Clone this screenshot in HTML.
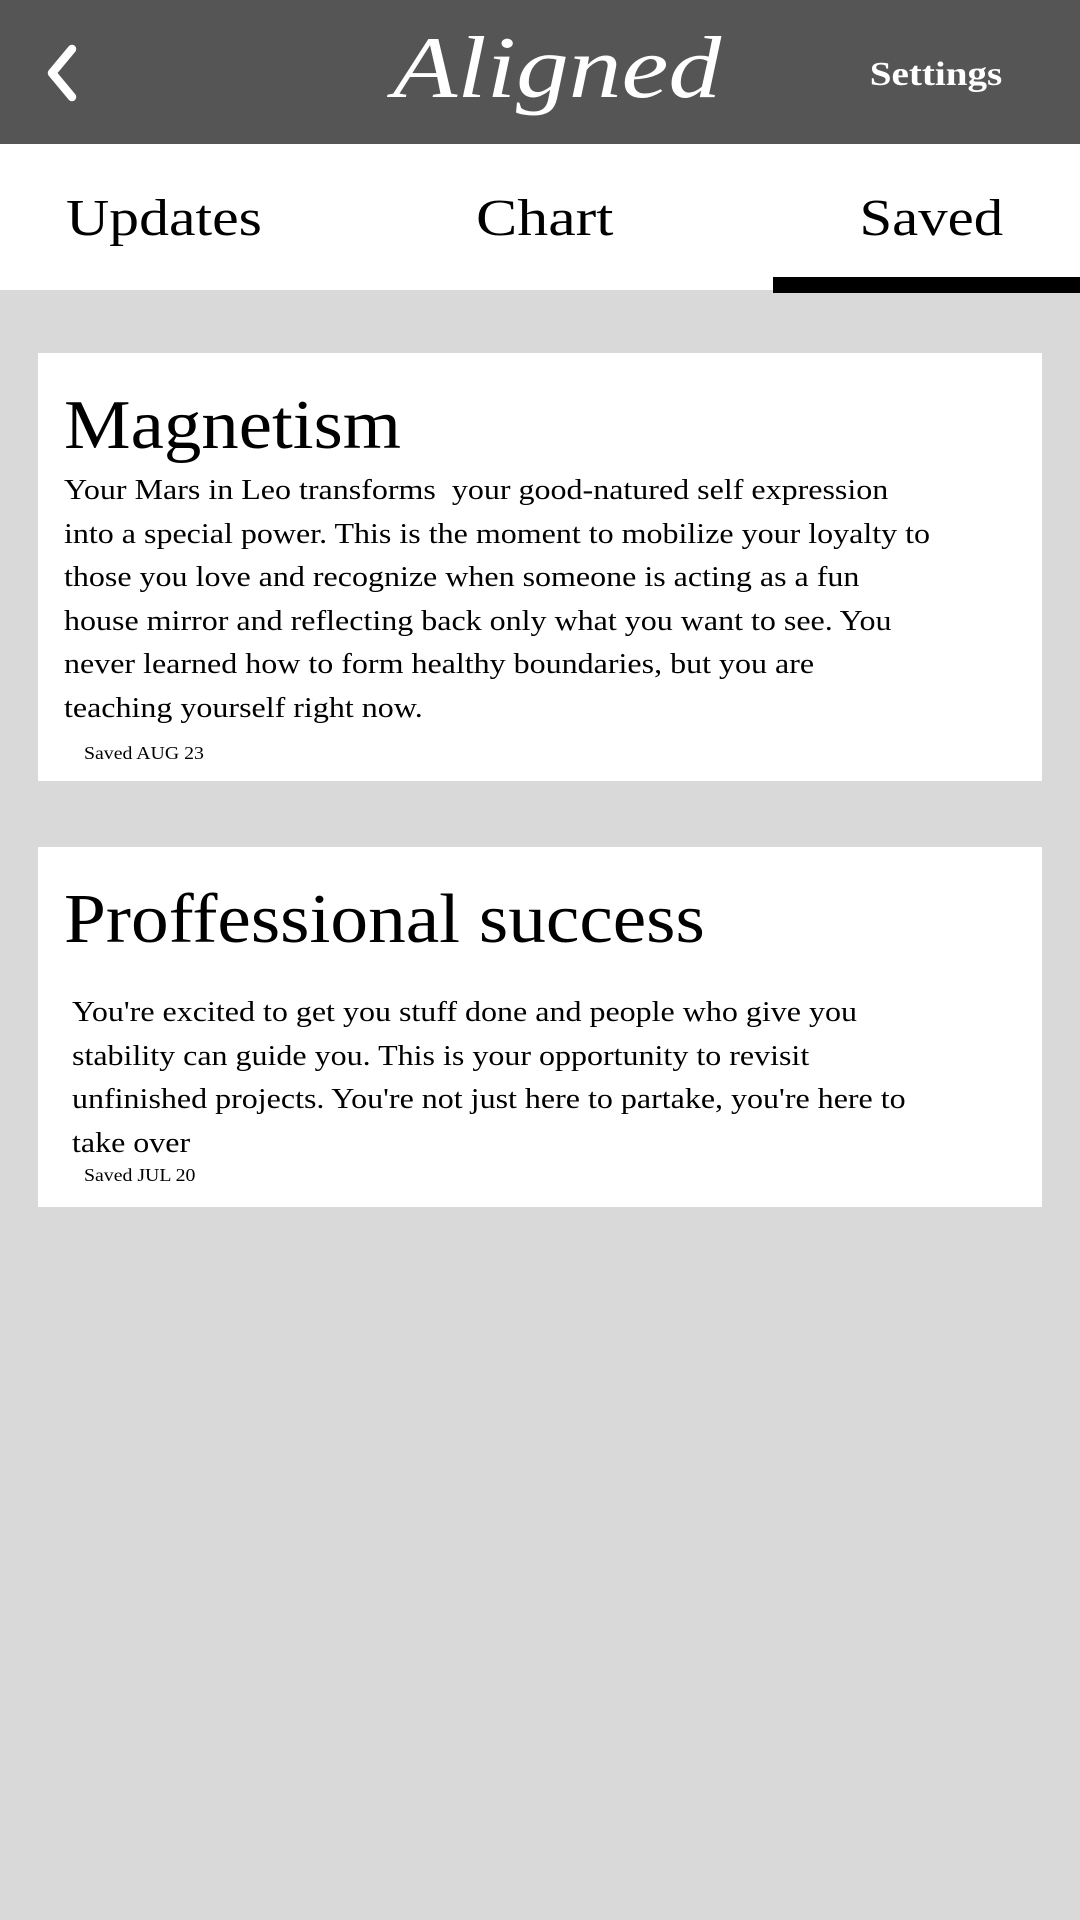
<!DOCTYPE html>
<html><head><meta charset="utf-8"><style>
body{margin:0;width:1080px;height:1920px;background:#d9d9d9;position:relative;overflow:hidden;font-family:"Liberation Serif",serif;color:#000}
.a{position:absolute;white-space:nowrap;transform-origin:left top}
.r{transform-origin:right top}
#hdr{position:absolute;left:0;top:0;width:1080px;height:144px;background:#555}
#tabs{position:absolute;left:0;top:144px;width:1080px;height:146px;background:#fff}
.card{position:absolute;left:38px;width:1004px;background:#fff}
.tab{font-size:52px;line-height:60px;top:189px}
.body{font-size:28px;line-height:43.6px;transform:scaleX(1.143)}
.sv{font-size:18px;line-height:22px;transform:scaleX(1.1)}
</style></head><body>
<div id="hdr"></div>
<svg class="a" style="left:40px;top:44px" width="40" height="58" viewBox="0 0 40 58"><path d="M32 5 L12 29 L32 53" fill="none" stroke="#fff" stroke-width="8.5" stroke-linecap="round" stroke-linejoin="round"/></svg>
<div class="a" style="left:387px;top:14px;width:340px;text-align:center;font-size:88px;line-height:110px;font-style:italic;color:#fff;transform:scaleX(1.2);transform-origin:center top">Aligned</div>
<div class="a r" style="right:78px;top:54px;font-size:34px;line-height:42px;color:#fff;font-weight:bold;transform:scaleX(1.15)">Settings</div>
<div id="tabs"></div>
<div class="a tab" style="left:66px;transform:scaleX(1.15)">Updates</div>
<div class="a tab" style="left:476px;transform:scaleX(1.19)">Chart</div>
<div class="a tab r" style="right:77px;transform:scaleX(1.13)">Saved</div>
<div class="a" style="left:773px;top:277px;width:307px;height:16px;background:#000"></div>

<div class="card" style="top:353px;height:428px"></div>
<div class="a" style="left:64px;top:386px;font-size:70px;line-height:80px;transform:scaleX(1.07)">Magnetism</div>
<div class="a body" style="left:64px;top:469px">Your Mars in Leo transforms&nbsp; your good-natured self expression<br>into a special power. This is the moment to mobilize your loyalty to<br>those you love and recognize when someone is acting as a fun<br>house mirror and reflecting back only what you want to see. You<br>never learned how to form healthy boundaries, but you are<br>teaching yourself right now.</div>
<div class="a sv" style="left:84px;top:742px">Saved AUG 23</div>

<div class="card" style="top:847px;height:360px"></div>
<div class="a" style="left:64px;top:880px;font-size:70px;line-height:80px;transform:scaleX(1.076)">Proffessional success</div>
<div class="a body" style="left:72px;top:991px">You're excited to get you stuff done and people who give you<br>stability can guide you. This is your opportunity to revisit<br>unfinished projects. You're not just here to partake, you're here to<br>take over</div>
<div class="a sv" style="left:84px;top:1164px">Saved JUL 20</div>
</body></html>
